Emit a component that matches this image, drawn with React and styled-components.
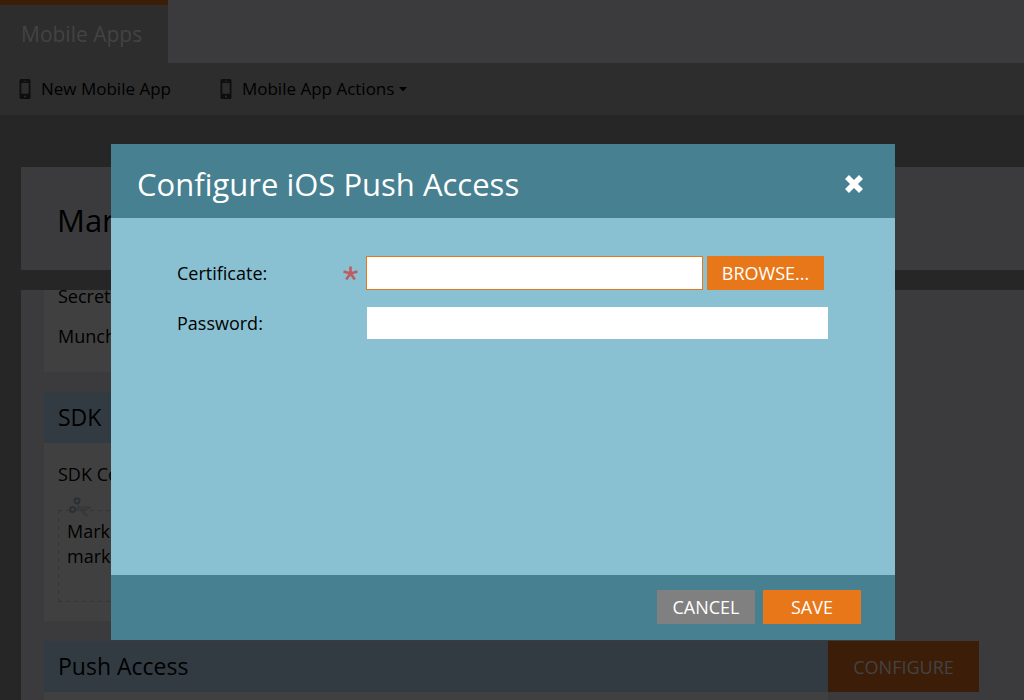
import React from 'react';
import styled, { createGlobalStyle } from 'styled-components';

const GlobalStyle = createGlobalStyle`
  *, *::before, *::after { box-sizing: border-box; }
  html, body { margin: 0; height: 100%; overflow: hidden; }
  body {
    background: #262626;
    color: #000;
    font-family: "Open Sans", "Noto Sans", sans-serif;
    font-size: 18px;
    line-height: 24px;
  }
  #root { height: 100%; }
  h1, h2, p { margin: 0; font-weight: 400; }
  button, input { font: inherit; border-radius: 0; }
`;

const Page = styled.div`
  display: flex;
  flex-direction: column;
  height: 100%;
  overflow: hidden;
`;

const TabBar = styled.nav`
  display: flex;
  flex: none;
  height: 63px;
  background: #3b3b3d;
`;

const Tab = styled.a`
  padding: 14px 26px 0 21px;
  border-top: 5px solid #3c1d08;
  background: #2d2d2d;
  color: #434343;
  font-size: 21px;
  font-weight: 500;
  line-height: 30px;
  text-decoration: none;
`;

const Toolbar = styled.div`
  display: flex;
  flex: none;
  align-items: center;
  gap: 49px;
  height: 52px;
  padding-left: 19px;
  background: #2d2d2d;
  font-size: 17px;
`;

const ToolButton = styled.button`
  display: flex;
  align-items: center;
  padding: 0;
  border: 0;
  background: none;
  color: #000;

  svg:first-child { margin-right: 10px; }
  svg + svg { margin-left: 5px; }
`;

const Main = styled.main`
  display: flex;
  flex: 1;
  flex-direction: column;
  gap: 20px;
  min-height: 0;
  padding: 52px 0 0 21px;
`;

const TitleCard = styled.header`
  flex: none;
  padding: 33px 36px 30px;
  background: #3b3b3d;
  font-size: 31px;
  line-height: 40px;

  h1 { font-size: inherit; }
`;

const Content = styled.div`
  display: flex;
  flex: 1;
  flex-direction: column;
  gap: 20px;
  min-height: 0;
  overflow: hidden;
  padding: 0 45px 0 23px;
  background: #3b3b3d;
`;

const Section = styled.section`
  display: grid;
  flex: none;
  grid-template-columns: 1fr 151px;
`;

const Details = styled.div`
  display: flex;
  flex-direction: column;
  gap: 28px;
  padding: 0 14px 30px;
  background: #404040;
  line-height: 12px;
`;

const SectionHead = styled.h2`
  height: 51px;
  padding-left: 14px;
  background: #333b42;
  font-size: 23px;
  line-height: 50px;
`;

const SectionBody = styled.div`
  grid-column: 1;
  min-height: 178px;
  padding: 19px 14px;
  background: #404040;
`;

const ConfigureButton = styled.button`
  border: 0;
  background: #3c1d08;
  color: #434343;
  font-weight: 500;
`;

const Coupon = styled.div`
  --dash: #343434 0 4px, transparent 4px 8px;
  position: relative;
  height: 92px;
  margin-top: 24px;
  padding: 9px;
  background:
    repeating-linear-gradient(90deg, var(--dash)) 0 0 / 100% 1px no-repeat,
    repeating-linear-gradient(90deg, var(--dash)) 0 100% / 100% 1px no-repeat,
    repeating-linear-gradient(180deg, var(--dash)) 0 0 / 1px 100% no-repeat,
    repeating-linear-gradient(180deg, var(--dash)) 100% 0 / 1px 100% no-repeat;
  line-height: 25px;

  svg {
    position: absolute;
    top: -13px;
    left: 11px;
  }
`;

const Backdrop = styled.div`
  position: fixed;
  inset: 0;
  display: flex;
  align-items: flex-start;
  justify-content: center;
  padding: 144px 129px 0 111px;
`;

const Dialog = styled.form`
  display: flex;
  flex: 1;
  flex-direction: column;
  background: #89c1d3;
`;

const DialogHead = styled.header`
  display: flex;
  align-items: center;
  justify-content: space-between;
  height: 74px;
  padding: 5px 31px 0 26px;
  background: #468091;
  color: #fff;

  h2 { font-size: 31px; font-weight: 500; line-height: 40px; }
`;

const CloseButton = styled.button`
  display: flex;
  padding: 0;
  border: 0;
  background: none;
`;

const Fields = styled.div`
  display: flex;
  flex-direction: column;
  gap: 16px;
  min-height: 357px;
  padding: 38px 66px 0;
`;

const Field = styled.div`
  display: grid;
  grid-template-columns: 166px 23px 1fr;
  align-items: center;

  label { grid-column: 1; }
`;

const Star = styled.span`
  display: flex;
`;

const Control = styled.div`
  display: flex;
  grid-column: 3;
  gap: 4px;
  margin-right: ${({ $inset }) => ($inset ? '5px' : '0')};
`;

const TextInput = styled.input`
  flex: 1;
  min-width: 0;
  height: 34px;
  padding: 0 8px;
  border: 1px solid ${({ $active }) => ($active ? '#e87719' : 'transparent')};
  outline: none;
  background: #fff;
  background-clip: padding-box;
`;

const ActionButton = styled.button`
  width: ${({ $wide }) => ($wide ? '117px' : '98px')};
  height: 34px;
  padding: 0;
  border: 0;
  background: ${({ $muted }) => ($muted ? '#808080' : '#e87719')};
  color: #fff;
  font-weight: 500;
`;

const DialogFoot = styled.footer`
  display: flex;
  justify-content: flex-end;
  gap: 8px;
  height: 65px;
  padding: 15px 34px 0;
  background: #468091;
`;

const PhoneIcon = () => (
  <svg width="12" height="20" viewBox="0 0 12 20" aria-hidden="true">
    <path
      fillRule="evenodd"
      fill="#0e0e0e"
      d="M2 0h8a1.500 1.500 0 0 1 1.500 1.500v17A1.500 1.500 0 0 1 10 20H2a1.500 1.500 0 0 1-1.500-1.500v-17A1.500 1.500 0 0 1 2 0zM2.300 4v10.800h7.400V4zM4.500 1.700v.8h3v-.8zM6 16.500a1 1 0 1 0 0 2 1 1 0 0 0 0-2z"
    />
  </svg>
);

const Caret = () => (
  <svg width="8" height="5" viewBox="0 0 8 5" aria-hidden="true">
    <path d="M0 0h8L4 4.500z" fill="#000" />
  </svg>
);

const Scissors = () => (
  <svg width="22" height="22" viewBox="0 0 22 22" fill="none" aria-hidden="true">
    <path d="M8.500 6 11 10l8.500 8.500-2.500 1L8 11z" fill="#363839" />
    <path d="M5.500 12.800 12 10l7-.8 2.500 1.600-4.500 1.400-11 1.500z" fill="#3a3b3c" stroke="#333537" strokeWidth=".7" />
    <circle cx="8" cy="3.800" r="2.500" stroke="#2d3033" strokeWidth="2" />
    <circle cx="3.600" cy="12.600" r="2.500" stroke="#2d3033" strokeWidth="2" />
  </svg>
);

const Asterisk = () => (
  <svg width="15" height="14" viewBox="0 0 15 14" aria-hidden="true">
    <path
      d="M7.500 7.500V.5M7.500 7.500.5 5.500M7.500 7.500l7-2M7.500 7.500l-4.300 6M7.500 7.500l4.300 6"
      stroke="#bd5d62"
      strokeWidth="2.600"
    />
  </svg>
);

const Cross = () => (
  <svg width="20" height="20" viewBox="0 0 20 20" aria-hidden="true">
    <path d="M3 3l14 14M17 3 3 17" stroke="#fff" strokeWidth="5.600" />
  </svg>
);

export default function App() {
  return (
    <>
      <GlobalStyle />
      <Page>
        <TabBar>
          <Tab href="#apps">Mobile Apps</Tab>
        </TabBar>
        <Toolbar>
          <ToolButton type="button"><PhoneIcon />New Mobile App</ToolButton>
          <ToolButton type="button"><PhoneIcon />Mobile App Actions<Caret /></ToolButton>
        </Toolbar>
        <Main>
          <TitleCard><h1>Mar</h1></TitleCard>
          <Content>
            <Section>
              <Details>
                <p>Secret</p>
                <p>Munch</p>
              </Details>
            </Section>
            <Section>
              <SectionHead>SDK</SectionHead>
              <SectionBody>
                <p>SDK Co</p>
                <Coupon>
                  <Scissors />
                  <p>Mark</p>
                  <p>mark</p>
                </Coupon>
              </SectionBody>
            </Section>
            <Section>
              <SectionHead>Push Access</SectionHead>
              <ConfigureButton type="button">CONFIGURE</ConfigureButton>
              <SectionBody />
            </Section>
          </Content>
        </Main>
      </Page>
      <Backdrop>
        <Dialog role="dialog" aria-labelledby="dialog-title" onSubmit={(e) => e.preventDefault()}>
          <DialogHead>
            <h2 id="dialog-title">Configure iOS Push Access</h2>
            <CloseButton type="button" aria-label="Close"><Cross /></CloseButton>
          </DialogHead>
          <Fields>
            <Field>
              <label htmlFor="certificate">Certificate:</label>
              <Star><Asterisk /></Star>
              <Control $inset>
                <TextInput id="certificate" type="text" required $active />
                <ActionButton type="button" $wide>BROWSE...</ActionButton>
              </Control>
            </Field>
            <Field>
              <label htmlFor="password">Password:</label>
              <Control>
                <TextInput id="password" type="password" />
              </Control>
            </Field>
          </Fields>
          <DialogFoot>
            <ActionButton type="button" $muted>CANCEL</ActionButton>
            <ActionButton type="submit">SAVE</ActionButton>
          </DialogFoot>
        </Dialog>
      </Backdrop>
    </>
  );
}
